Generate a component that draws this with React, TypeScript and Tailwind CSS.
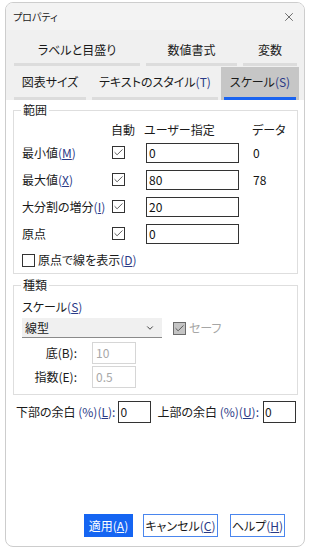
import React from 'react';
import { X, ChevronDown, Check } from 'lucide-react';

const Mn = ({ children }: { children: React.ReactNode }) => (
  <span className="text-[#2a3a86]">{children}</span>
);

const Box = ({ disabled = false, checked = true }: { disabled?: boolean; checked?: boolean }) => (
  <div
    className={`w-[13px] h-[13px] border flex items-center justify-center ${
      disabled ? 'border-[#6b6b6b] bg-[#c4c4c4]' : 'border-[#333] bg-white'
    }`}
  >
    {checked && <Check size={11} strokeWidth={1.6} className={disabled ? 'text-[#333]' : 'text-[#222]'} />}
  </div>
);

const Field = ({ value, w = 'w-[93px]' }: { value: string; w?: string }) => (
  <div className={`${w} h-[20px] border border-[#333] bg-white flex items-center pl-[2px] text-[12px] text-[#111]`}>
    {value}
  </div>
);

export default function App() {
  const rows = [
    { label: <>最小値<Mn>(<u>M</u>)</Mn></>, value: '0', data: '0' },
    { label: <>最大値<Mn>(<u>X</u>)</Mn></>, value: '80', data: '78' },
    { label: <>大分割の増分<Mn>(<u>I</u>)</Mn></>, value: '20', data: '' },
    { label: <>原点</>, value: '0', data: '' },
  ];

  return (
    <div className="w-[310px] h-[551px] bg-white pt-[2px] px-[5px] font-['Noto_Sans_CJK_JP',sans-serif] [font-feature-settings:'palt'] text-[12px] text-[#1a1a1a]">
      <div className="h-[545px] rounded-[8px] border border-[#cdcdcd] bg-white flex flex-col overflow-hidden">
        {/* Title bar */}
        <div className="h-[27px] bg-[#f3f3f3] flex items-center justify-between pl-[7px] pr-[8px]">
          <span className="text-[10px] text-[#222]">プロパティ</span>
          <X size={14} strokeWidth={1.2} className="text-[#333]" />
        </div>

        {/* Tabs */}
        <div className="bg-[#f0f0f0] pt-[4px] pl-[8px] pr-[4px]">
          <div className="flex h-[32px] gap-[6px]">
            <div className="w-[126px] shrink-0 flex flex-col">
              <div className="flex-1 flex items-center justify-center pt-[3px]">ラベルと目盛り</div>
              <div className="h-[3px] bg-[#dcdcdc]" />
            </div>
            <div className="w-[91px] shrink-0 flex flex-col">
              <div className="flex-1 flex items-center justify-center pt-[3px]">数値書式</div>
              <div className="h-[3px] bg-[#dcdcdc]" />
            </div>
            <div className="w-[54px] shrink-0 flex flex-col">
              <div className="flex-1 flex items-center justify-center pt-[3px]">変数</div>
              <div className="h-[3px] bg-[#dcdcdc]" />
            </div>
          </div>
          <div className="flex h-[34px] gap-[6px] pt-[1px]">
            <div className="w-[72px] shrink-0 flex flex-col">
              <div className="flex-1 flex items-center justify-center">図表サイズ</div>
              <div className="h-[3px] bg-[#dcdcdc]" />
            </div>
            <div className="w-[126px] shrink-0 flex flex-col">
              <div className="flex-1 flex items-center justify-center">
                テキストのスタイル<Mn>(T)</Mn>
              </div>
              <div className="h-[3px] bg-[#dcdcdc]" />
            </div>
            <div className="w-[78px] shrink-0 -ml-[3px] bg-[#c6c6c6] flex flex-col px-[3px]">
              <div className="flex-1 flex items-center justify-center">
                スケール<Mn>(S)</Mn>
              </div>
              <div className="h-[3px] bg-[#1a63f0]" />
            </div>
          </div>
        </div>

        {/* Content */}
        <div className="flex-1 flex flex-col px-[7px] pt-[3px]">
          <fieldset className="w-[285px] border border-[#dedede] px-[8px] pb-0">
            <legend className="ml-[-1px] px-[2px] text-[12px] leading-[14px]">範囲</legend>
            <div className="flex h-[22px] items-center pt-[4px]">
              <div className="w-[91px]" />
              <div className="w-[32px] text-left -ml-[2px]">自動</div>
              <div className="w-[109px] pl-[1px]">ユーザー指定</div>
              <div>データ</div>
            </div>
            {rows.map((r, i) => (
              <div key={i} className="flex h-[27px] items-center">
                <div className="w-[90px] whitespace-nowrap">{r.label}</div>
                <div className="w-[34px]">
                  <Box />
                </div>
                <Field value={r.value} />
                <div className="pl-[14px] text-[#111]">{r.data}</div>
              </div>
            ))}
            <div className="flex h-[26px] items-center gap-[3px]">
              <Box checked={false} />
              <span>
                原点で線を表示<Mn>(<u>D</u>)</Mn>
              </span>
            </div>
          </fieldset>

          <fieldset className="w-[285px] mt-[4px] border border-[#dedede] px-[8px] pb-[6px]">
            <legend className="ml-[-1px] px-[2px] text-[12px] leading-[14px]">種類</legend>
            <div className="h-[18px] flex items-center mt-[6px]">
              スケール<Mn>(<u>S</u>)</Mn>
            </div>
            <div className="flex items-center mt-[2px]">
              <div className="w-[140px] h-[20px] bg-[#f0f0f0] border-b border-[#8a8a8a] flex items-center justify-between pl-[3px] pr-[7px]">
                <span>線型</span>
                <ChevronDown size={10} strokeWidth={2.2} className="text-[#333]" />
              </div>
              <div className="ml-[11px] flex items-center gap-[3px]">
                <Box disabled />
                <span className="text-[#a6a6a6]">セーフ</span>
              </div>
            </div>
            <div className="flex items-center mt-[4px] h-[22px]">
              <div className="w-[55px] text-right">底(B):</div>
              <div className="ml-[15px] w-[44px] h-[22px] border border-[#d6d6d6] flex items-center pl-[3px] text-[#a8a8a8]">10</div>
            </div>
            <div className="flex items-center mt-[2px] h-[22px]">
              <div className="w-[55px] text-right">指数(E):</div>
              <div className="ml-[15px] w-[44px] h-[22px] border border-[#d6d6d6] flex items-center pl-[3px] text-[#a8a8a8]">0.5</div>
            </div>
          </fieldset>

          <div className="flex items-center mt-[6px] pl-[3px] h-[22px]">
            <span>
              下部の余白 <Mn>(%)(<u>L</u>):</Mn>
            </span>
            <div className="ml-[3px] w-[33px] h-[22px] border border-[#333] flex items-center pl-[1px]">0</div>
            <span className="ml-[6px]">
              上部の余白 <Mn>(%)(<u>U</u>):</Mn>
            </span>
            <div className="ml-[4px] w-[33px] h-[22px] border border-[#333] flex items-center pl-[1px]">0</div>
          </div>

          <div className="flex-1" />

          <div className="flex justify-end gap-[10px] pr-[12px] pb-[9px]">
            <div className="w-[49px] h-[23px] bg-[#1565f2] text-white flex items-center justify-center">
              適用(<u>A</u>)
            </div>
            <div className="w-[75px] h-[23px] border border-[#4a86ee] flex items-center justify-center">
              キャンセル<Mn>(<u>C</u>)</Mn>
            </div>
            <div className="w-[55px] h-[23px] border border-[#4a86ee] flex items-center justify-center ml-[2px]">
              ヘルプ<Mn>(<u>H</u>)</Mn>
            </div>
          </div>
        </div>
      </div>
    </div>
  );
}
